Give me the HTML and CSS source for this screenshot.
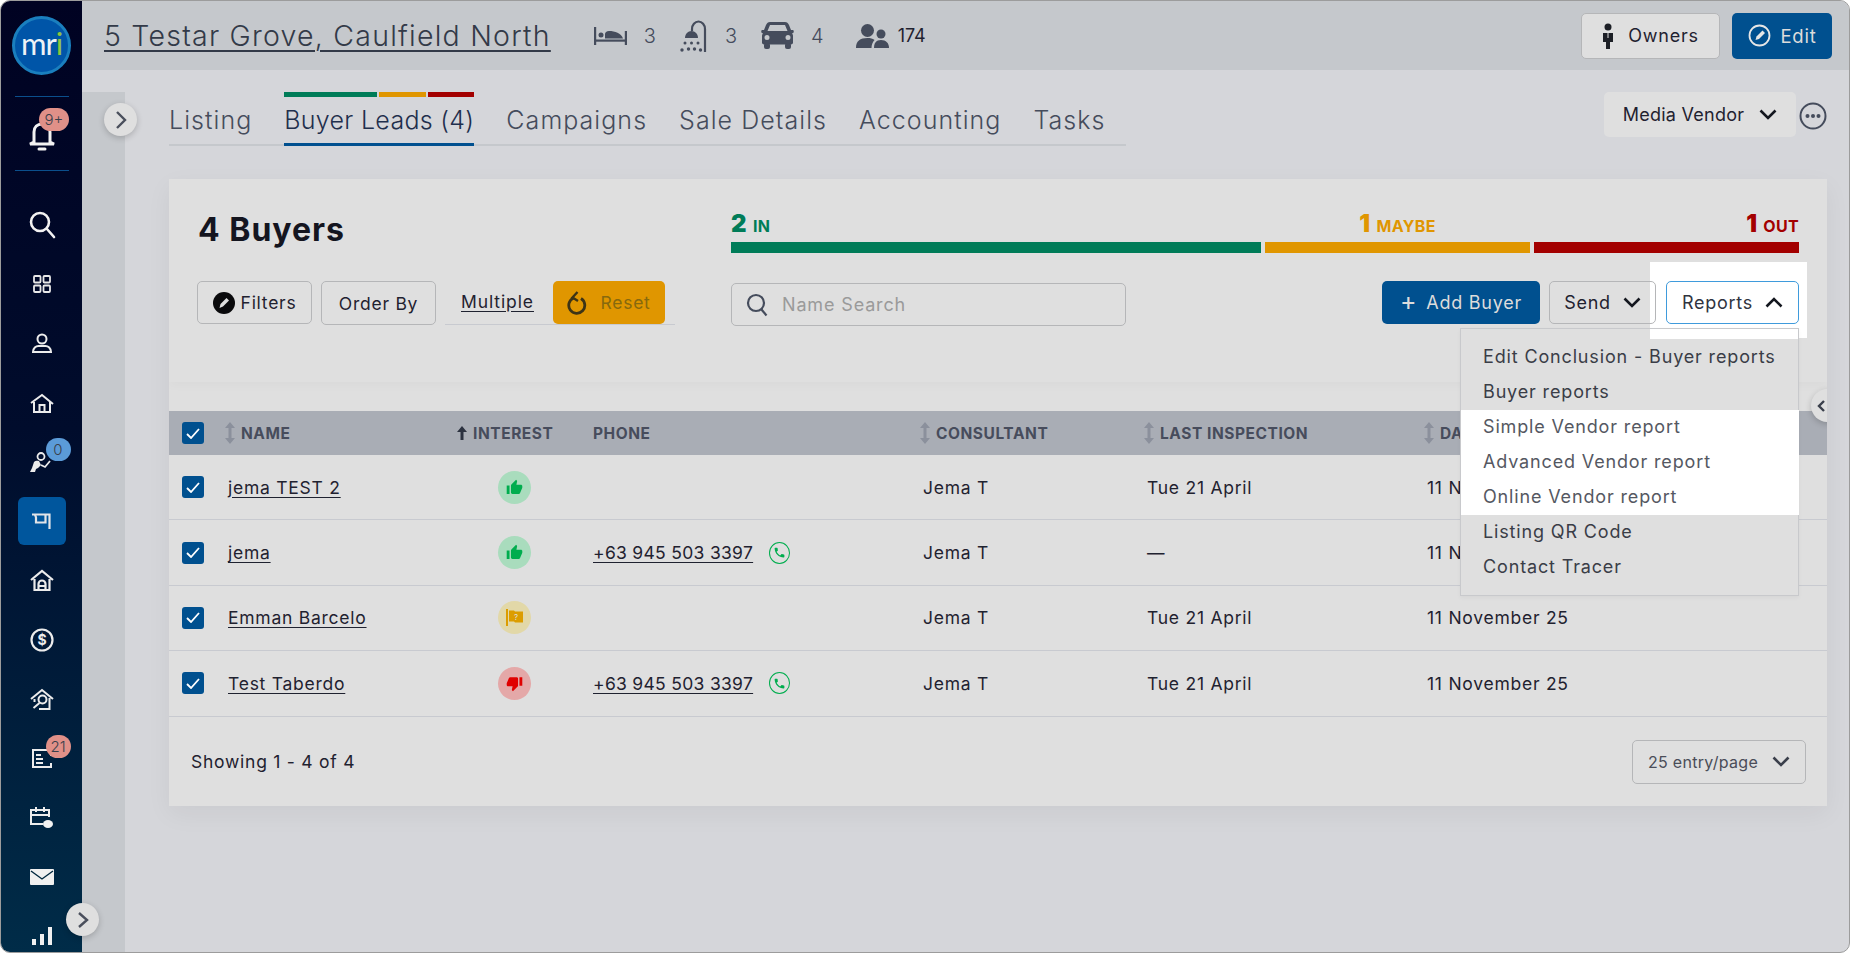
FILE: index.html
```html
<!DOCTYPE html>
<html lang="en">
<head>
    <meta charset="UTF-8">
    <meta name="viewport" content="width=device-width, initial-scale=1.0">
    <title>Buyer Leads</title>
    <link rel="stylesheet" href="styles.css">
</head>
<body>
<div class="app">
    <aside class="sidebar">
        <div class="logo"><span>m</span><span>r</span><span class="logo-i">i</span></div>
        <div class="side-sep"></div>
        <div class="side-bell">
            <svg width="30" height="34" viewBox="0 0 30 34" fill="none" stroke="#f2f2f2" stroke-width="3"><path d="M7 25V15c0-5 3.500-8 8-8s8 3 8 8v10l4 2H3z"/><path d="M12 32h6" stroke-linecap="round"/></svg>
            <span class="badge badge-red badge-bell">9+</span>
        </div>
        <div class="side-sep"></div>
        <nav class="side-nav">
            <a class="side-item"><svg width="28" height="30" viewBox="0 0 28 30" fill="none" stroke="#f2f2f2" stroke-width="2.600"><circle cx="12" cy="12" r="9"/><path d="M19 19l7 8" stroke-linecap="round"/></svg></a>
            <a class="side-item"><svg width="18" height="18" viewBox="0 0 18 18" fill="none" stroke="#e8e8e8" stroke-width="1.800"><rect x="1" y="1" width="6.500" height="6.500" rx="1"/><rect x="10.500" y="1" width="6.500" height="6.500" rx="1"/><rect x="1" y="10.500" width="6.500" height="6.500" rx="1"/><rect x="10.500" y="10.500" width="6.500" height="6.500" rx="1"/></svg></a>
            <a class="side-item"><svg width="22" height="20" viewBox="0 0 22 20" fill="none" stroke="#ececec" stroke-width="2"><circle cx="11" cy="6" r="4.500"/><path d="M2 19c0-4 3-6 5.500-6h7c2.500 0 5.500 2 5.500 6z"/></svg></a>
            <a class="side-item"><svg width="24" height="20" viewBox="0 0 24 20" fill="none" stroke="#ececec" stroke-width="2"><path d="M1 10L12 2l11 9M4 9v10h16V9"/><path d="M9.500 19v-7h5v7"/></svg></a>
            <a class="side-item"><svg width="24" height="22" viewBox="0 0 24 22" fill="#ececec"><circle cx="11" cy="5.500" r="3.500" fill="none" stroke="#ececec" stroke-width="1.800"/><path d="M0 21l2-4 2-6c1-1 3-1.500 5-1l2 4-3 3-2 1-1 3z"/><path d="M11 14l4 2 5-6" fill="none" stroke="#ececec" stroke-width="1.800"/></svg><span class="badge badge-blue badge-nav">0</span></a>
            <a class="side-item side-active"><svg width="19" height="16" viewBox="0 0 19 16" fill="none" stroke="#e2e4e8" stroke-width="2.200"><path d="M0 1.500h17.500V16"/><path d="M3 1.500l1 3v5h9.500v-8"/></svg></a>
            <a class="side-item"><svg width="24" height="22" viewBox="0 0 24 22" fill="none" stroke="#ececec" stroke-width="2.200"><path d="M1 11L12 2l11 9M4.500 10v11h15V10"/><path d="M8.500 21v-6a3.500 3.500 0 0 1 7 0v6M8.500 17h7"/></svg></a>
            <a class="side-item"><svg width="24" height="24" viewBox="0 0 24 24"><circle cx="12" cy="12" r="10.500" fill="none" stroke="#ececec" stroke-width="2.200"/><text x="12" y="17" text-anchor="middle" class="dollar">$</text></svg></a>
            <a class="side-item"><svg width="24" height="22" viewBox="0 0 24 22" fill="none" stroke="#ececec" stroke-width="2"><path d="M1 11L12 2l11 9M4.500 11v3M19.500 10v11H9"/><circle cx="12.500" cy="11.500" r="4"/><path d="M9.500 15l-6 5"/></svg></a>
            <a class="side-item"><svg width="22" height="20" viewBox="0 0 22 20" fill="none" stroke="#ececec" stroke-width="2"><path d="M20 8V2H2v17h18v-4"/><path d="M5 7h5M5 11h7M5 15h7"/></svg><span class="badge badge-red badge-nav">21</span></a>
            <a class="side-item"><svg width="26" height="24" viewBox="0 0 26 24" fill="none" stroke="#ececec" stroke-width="2"><path d="M14 18H2V4h18v7"/><path d="M2 9h18M7 1v5M15 1v5"/><ellipse cx="19" cy="18" rx="5" ry="4" fill="#f2f2f2" stroke="none"/></svg></a>
            <a class="side-item"><svg width="24" height="16" viewBox="0 0 24 16"><rect width="24" height="16" rx="1" fill="#f0f0f0"/><path d="M1 2l11 8 11-8" fill="none" stroke="#00283f" stroke-width="1.400"/></svg></a>
            <a class="side-item"><svg width="20" height="18" viewBox="0 0 20 18" fill="#f0f0f0"><rect x="0" y="12" width="4" height="6"/><rect x="8" y="7" width="4" height="11"/><rect x="16" y="0" width="4" height="18"/></svg></a>
        </nav>
        <button class="round-btn side-toggle"><svg width="14" height="16" viewBox="0 0 14 16" fill="none" stroke="#4a4f5c" stroke-width="2.400"><path d="M3 1l8 7-8 7"/></svg></button>
    </aside>

    <div class="main">
        <header class="topbar">
            <a class="prop-title">5 Testar Grove, Caulfield North</a>
            <div class="prop-stats">
                <svg class="bed" width="33" height="18" viewBox="0 0 33 18" fill="#454c5c"><rect x="0" y="0" width="2.200" height="18"/><rect x="30.800" y="4" width="2.200" height="14"/><rect x="1" y="12.500" width="31" height="2.200"/><circle cx="7" cy="8" r="2.500"/><path d="M11 11.500V7c0-1.500 1.500-3 4-3 6 0 12 2 14 7.500z"/></svg>
                <span class="stat-num">3</span>
                <svg class="shower" width="28" height="32" viewBox="0 0 28 32" fill="#454c5c"><path d="M25 32V9a6.500 7.500 0 0 0-13 0v2" fill="none" stroke="#454c5c" stroke-width="2.200"/><path d="M5 18c0-4 3-7 6.500-7s6.500 3 6.500 7z"/><circle cx="5" cy="23" r="1.500"/><circle cx="11.500" cy="23" r="1.500"/><circle cx="18" cy="23" r="1.500"/><circle cx="2" cy="30" r="1.700"/><circle cx="8.500" cy="29" r="1.700"/><circle cx="14.500" cy="29" r="1.700"/><circle cx="20.500" cy="30" r="1.700"/></svg>
                <span class="stat-num">3</span>
                <svg class="car" width="33" height="27" viewBox="0 0 33 27" fill="#454c5c"><path fill-rule="evenodd" d="M9 0h15c2 0 3 1 4 3l2 5h2c1 0 1 3 0 3l-1 .5c1 1 1 2 1 3v6c0 1-1 2-2 2H3c-1 0-2-1-2-2v-6c0-1 0-2 1-3L1 11c-1 0-1-3 0-3h2l2-5c1-2 2-3 4-3zm0 3L6.500 9h20L24 3zM6 13a2.500 2.500 0 1 0 0 5 2.500 2.500 0 0 0 0-5zm21 0a2.500 2.500 0 1 0 0 5 2.500 2.500 0 0 0 0-5z"/><rect x="3" y="21" width="6" height="6" rx="2"/><rect x="24" y="21" width="6" height="6" rx="2"/></svg>
                <span class="stat-num stat-car">4</span>
                <svg class="people" width="33" height="24" viewBox="0 0 33 24" fill="#454c5c"><circle cx="11.500" cy="6.500" r="6.500"/><path d="M0 24c0-7 4-10 11.500-10 3 0 5 .5 7 2-2 2-3 5-3 8z"/><circle cx="25" cy="10" r="4.500"/><path d="M18 24c0-5 2-8 7-8s8 3 8 8z"/></svg>
                <span class="stat-count">174</span>
            </div>
            <div class="top-actions">
                <button class="btn btn-owners"><svg width="12" height="26" viewBox="0 0 12 26" fill="#1c1f26"><circle cx="6" cy="4" r="3.500"/><path d="M1 10h10v9H8v7H4v-7H1z"/><path d="M6 10v5" stroke="#dfdfdf"/></svg>Owners</button>
                <button class="btn btn-blue btn-edit"><svg width="23" height="23" viewBox="0 0 23 23" fill="none" stroke="#e6e6e6" stroke-width="1.800"><circle cx="11.500" cy="11.500" r="10"/><path d="M7.500 16l1-3.500 6-6 2.500 2.500-6 6z" fill="#e6e6e6" stroke="none"/></svg>Edit</button>
            </div>
        </header>

        <div class="page">
            <div class="strip">
                <button class="round-btn strip-toggle"><svg width="14" height="18" viewBox="0 0 14 18" fill="none" stroke="#4a4f5c" stroke-width="2.400"><path d="M3 1l8 8-8 8"/></svg></button>
            </div>
            <div class="content">
                <div class="tabs-row">
                    <div class="tabs">
                        <a class="tab">Listing</a>
                        <a class="tab tab-active">
                            <span class="tab-bars"><i class="bar-in"></i><i class="bar-maybe"></i><i class="bar-out"></i></span>
                            Buyer Leads (4)
                        </a>
                        <a class="tab">Campaigns</a>
                        <a class="tab">Sale Details</a>
                        <a class="tab">Accounting</a>
                        <a class="tab">Tasks</a>
                    </div>
                    <div class="tabs-side">
                        <button class="vendor-select">Media Vendor <svg width="18" height="11" viewBox="0 0 18 11" fill="none" stroke="#14171f" stroke-width="2.600"><path d="M1.500 1.500L9 9l7.500-7.500"/></svg></button>
                        <svg class="more" width="28" height="28" viewBox="0 0 28 28" fill="#454c5c"><circle cx="14" cy="14" r="12.500" fill="none" stroke="#454c5c" stroke-width="2"/><circle cx="8.500" cy="14" r="2"/><circle cx="14" cy="14" r="2"/><circle cx="19.500" cy="14" r="2"/></svg>
                    </div>
                </div>

                <section class="card">
                    <div class="card-top">
                        <div class="top-grid">
                            <h1 class="card-title">4 Buyers</h1>
                            <div class="progress">
                                <div class="seg seg-in"><div class="seg-label"><b>2</b> IN</div><div class="seg-bar"></div></div>
                                <div class="seg seg-maybe"><div class="seg-label"><b>1</b> MAYBE</div><div class="seg-bar"></div></div>
                                <div class="seg seg-out"><div class="seg-label"><b>1</b> OUT</div><div class="seg-bar"></div></div>
                            </div>
                            <div class="filter-row">
                                <button class="btn btn-filters"><svg width="22" height="22" viewBox="0 0 22 22"><circle cx="11" cy="11" r="11" fill="#0a0a0c"/><path d="M6.500 16l1-4 6-6 2.500 2.500-6 6z" fill="#dfdfdf"/></svg>Filters</button>
                                <button class="btn btn-order">Order By</button>
                                <div class="multi-group">
                                    <a class="multiple">Multiple</a>
                                    <button class="btn btn-reset"><svg width="20" height="24" viewBox="0 0 20 24" fill="none" stroke="#3d3416" stroke-width="2.800"><path d="M14 7.500a8 8 0 1 1-7.500-.5"/><path d="M10.500 1L5.500 6.500 11 10" stroke-width="2.400"/></svg>Reset</button>
                                </div>
                            </div>
                            <div class="action-row">
                                <div class="search-box">
                                    <svg width="22" height="24" viewBox="0 0 22 24" fill="none" stroke="#454c5c" stroke-width="2.200"><circle cx="10" cy="10" r="8"/><path d="M15.500 16.500l5 6"/></svg>
                                    <input class="search-input" type="text" placeholder="Name Search">
                                </div>
                                <div class="action-btns">
                                    <button class="btn btn-blue btn-add"><span class="plus">+</span>Add Buyer</button>
                                    <button class="btn btn-send">Send <svg width="18" height="11" viewBox="0 0 18 11" fill="none" stroke="#14171f" stroke-width="2.600"><path d="M1.500 1.500L9 9l7.500-7.500"/></svg></button>
                                    <div class="reports-wrap">
                                        <span class="spot"></span>
                                        <button class="btn btn-reports">Reports <svg width="18" height="11" viewBox="0 0 18 11" fill="none" stroke="#14171f" stroke-width="2.600"><path d="M1.500 9.500L9 2l7.500 7.500"/></svg></button>
                                        <div class="reports-menu">
                                            <a class="menu-link">Edit Conclusion - Buyer reports</a>
                                            <a class="menu-link">Buyer reports</a>
                                            <a class="menu-link menu-lit">Simple Vendor report</a>
                                            <a class="menu-link menu-lit">Advanced Vendor report</a>
                                            <a class="menu-link menu-lit">Online Vendor report</a>
                                            <a class="menu-link">Listing QR Code</a>
                                            <a class="menu-link">Contact Tracer</a>
                                        </div>
                                    </div>
                                </div>
                            </div>
                        </div>
                    </div>

                    <div class="table">
                        <div class="t-row t-head">
                            <div><span class="check"><svg width="14" height="11" viewBox="0 0 14 11" fill="none" stroke="#fff" stroke-width="1.800"><path d="M1 6l4 4 8-9"/></svg></span></div>
                            <div class="th"><svg class="sort" width="10" height="22" viewBox="0 0 10 22" fill="#8b909c"><path d="M5 0l5 6H6.500v10H10l-5 6-5-6h3.500V6H0z"/></svg>Name</div>
                            <div class="th th-interest"><svg class="sort-up" width="10" height="14" viewBox="0 0 10 14" fill="#2c3240"><path d="M5 0l5 6H6.500v8h-3V6H0z"/></svg>Interest</div>
                            <div class="th th-plain">Phone</div>
                            <div class="th"><svg class="sort" width="10" height="22" viewBox="0 0 10 22" fill="#8b909c"><path d="M5 0l5 6H6.500v10H10l-5 6-5-6h3.500V6H0z"/></svg>Consultant</div>
                            <div class="th"><svg class="sort" width="10" height="22" viewBox="0 0 10 22" fill="#8b909c"><path d="M5 0l5 6H6.500v10H10l-5 6-5-6h3.500V6H0z"/></svg>Last Inspection</div>
                            <div class="th"><svg class="sort" width="10" height="22" viewBox="0 0 10 22" fill="#8b909c"><path d="M5 0l5 6H6.500v10H10l-5 6-5-6h3.500V6H0z"/></svg>Date</div>
                        </div>

                        <div class="t-row">
                            <div><span class="check"><svg width="14" height="11" viewBox="0 0 14 11" fill="none" stroke="#fff" stroke-width="1.800"><path d="M1 6l4 4 8-9"/></svg></span></div>
                            <div><a class="link">jema TEST 2</a></div>
                            <div class="interest-cell"><span class="interest int-in"><svg width="17" height="17" viewBox="0 0 24 24" fill="#00ad4e"><path d="M1 21h4V9H1v12zm22-11c0-1.100-.9-2-2-2h-6.310l.95-4.570.03-.32c0-.41-.17-.79-.44-1.060L14.170 1 7.590 7.590C7.220 7.950 7 8.450 7 9v10c0 1.100.9 2 2 2h9c.83 0 1.540-.5 1.840-1.220l3.020-7.050c.09-.23.14-.47.14-.73v-2z"/></svg></span></div>
                            <div></div>
                            <div>Jema T</div>
                            <div>Tue 21 April</div>
                            <div>11 November 25</div>
                        </div>
                        <div class="t-row">
                            <div><span class="check"><svg width="14" height="11" viewBox="0 0 14 11" fill="none" stroke="#fff" stroke-width="1.800"><path d="M1 6l4 4 8-9"/></svg></span></div>
                            <div><a class="link">jema</a></div>
                            <div class="interest-cell"><span class="interest int-in"><svg width="17" height="17" viewBox="0 0 24 24" fill="#00ad4e"><path d="M1 21h4V9H1v12zm22-11c0-1.100-.9-2-2-2h-6.310l.95-4.570.03-.32c0-.41-.17-.79-.44-1.060L14.170 1 7.590 7.590C7.220 7.950 7 8.450 7 9v10c0 1.100.9 2 2 2h9c.83 0 1.540-.5 1.840-1.220l3.020-7.050c.09-.23.14-.47.14-.73v-2z"/></svg></span></div>
                            <div class="phone-cell"><a class="link">+63 945 503 3397</a><span class="call"><svg width="13" height="13" viewBox="0 0 24 24" fill="#00ad4e"><path d="M6.620 10.790c1.440 2.830 3.760 5.140 6.590 6.590l2.200-2.200c.27-.27.67-.36 1.020-.24 1.120.37 2.330.57 3.570.57.55 0 1 .45 1 1V20c0 .55-.45 1-1 1-9.390 0-17-7.610-17-17 0-.55.45-1 1-1h3.500c.55 0 1 .45 1 1 0 1.250.2 2.450.57 3.570.11.35.03.74-.25 1.020l-2.200 2.200z"/></svg></span></div>
                            <div>Jema T</div>
                            <div>—</div>
                            <div>11 November 25</div>
                        </div>
                        <div class="t-row">
                            <div><span class="check"><svg width="14" height="11" viewBox="0 0 14 11" fill="none" stroke="#fff" stroke-width="1.800"><path d="M1 6l4 4 8-9"/></svg></span></div>
                            <div><a class="link">Emman Barcelo</a></div>
                            <div class="interest-cell"><span class="interest int-maybe"><svg width="17" height="17" viewBox="0 0 17 17" fill="#dc9d00"><rect x="0" y="0" width="2" height="17"/><path d="M3 1.500h5l1 1h8v11H9l-1-1H3z"/><text x="10" y="11" text-anchor="middle" class="flag-q">?</text></svg></span></div>
                            <div></div>
                            <div>Jema T</div>
                            <div>Tue 21 April</div>
                            <div>11 November 25</div>
                        </div>
                        <div class="t-row">
                            <div><span class="check"><svg width="14" height="11" viewBox="0 0 14 11" fill="none" stroke="#fff" stroke-width="1.800"><path d="M1 6l4 4 8-9"/></svg></span></div>
                            <div><a class="link">Test Taberdo</a></div>
                            <div class="interest-cell"><span class="interest int-out"><svg width="17" height="17" viewBox="0 0 24 24" fill="#e00000"><path d="M15 3H6c-.83 0-1.540.5-1.840 1.220l-3.020 7.050c-.09.23-.14.47-.14.73v2c0 1.100.9 2 2 2h6.310l-.95 4.570-.03.32c0 .41.17.79.44 1.060L9.830 23l6.590-6.590c.36-.36.58-.86.58-1.410V5c0-1.100-.9-2-2-2zm4 0v12h4V3h-4z"/></svg></span></div>
                            <div class="phone-cell"><a class="link">+63 945 503 3397</a><span class="call"><svg width="13" height="13" viewBox="0 0 24 24" fill="#00ad4e"><path d="M6.620 10.790c1.440 2.830 3.760 5.140 6.590 6.590l2.200-2.200c.27-.27.67-.36 1.020-.24 1.120.37 2.330.57 3.570.57.55 0 1 .45 1 1V20c0 .55-.45 1-1 1-9.390 0-17-7.610-17-17 0-.55.45-1 1-1h3.500c.55 0 1 .45 1 1 0 1.250.2 2.450.57 3.570.11.35.03.74-.25 1.020l-2.200 2.200z"/></svg></span></div>
                            <div>Jema T</div>
                            <div>Tue 21 April</div>
                            <div>11 November 25</div>
                        </div>
                    </div>

                    <div class="table-foot">
                        <span>Showing 1 - 4 of 4</span>
                        <button class="btn btn-perpage">25 entry/page <svg width="18" height="11" viewBox="0 0 18 11" fill="none" stroke="#3a3f4b" stroke-width="2.600"><path d="M1.500 1.500L9 9l7.500-7.500"/></svg></button>
                    </div>
                    <button class="round-btn card-toggle"><svg width="10" height="12" viewBox="0 0 10 12" fill="none" stroke="#3a3f4b" stroke-width="2.400"><path d="M8 1L3 6l5 5"/></svg></button>
                </section>
            </div>
        </div>
    </div>
</div>
</body>
</html>
```

FILE: styles.css
```css
* {
    box-sizing: border-box;
}
html, body {
    margin: 0;
    height: 953px;
    overflow: hidden;
    background: #fff;
}
body {
    font-family: Inter, "Open Sans", sans-serif;
    font-size: 17.5px;
    letter-spacing: 0.75px;
    color: #1f2230;
}
button {
    font-family: inherit;
    font-size: inherit;
    letter-spacing: inherit;
    color: inherit;
    cursor: pointer;
}
a {
    color: inherit;
}
.app {
    display: flex;
    height: 953px;
    border: 1px solid #9c9c9c;
    border-radius: 10px;
    overflow: hidden;
    background: #d5d6da;
}

/* sidebar */
.sidebar {
    position: relative;
    width: 81px;
    flex-shrink: 0;
    display: flex;
    flex-direction: column;
    align-items: center;
    background: linear-gradient(180deg, #000222 0%, #000c2c 45%, #002c48 100%);
}
.logo {
    width: 59px;
    height: 59px;
    margin-top: 15px;
    flex-shrink: 0;
    border-radius: 50%;
    background: #0055a8;
    border: 3px solid #1a7fbe;
    display: flex;
    align-items: center;
    justify-content: center;
    font-family: Lato, sans-serif;
    font-size: 31px;
    font-weight: 400;
    letter-spacing: -1px;
    color: #eef2f6;
    padding-bottom: 5px;
}
.logo-i {
    color: #8dc63f;
}
.side-sep {
    width: 54px;
    height: 1px;
    flex-shrink: 0;
    background: #0b4f8c;
}
.logo + .side-sep {
    margin-top: 21px;
}
.side-bell {
    position: relative;
    height: 73px;
    width: 100%;
    flex-shrink: 0;
    display: flex;
    align-items: center;
    justify-content: center;
}
.side-nav {
    display: flex;
    flex-direction: column;
    align-items: center;
    margin-top: 24px;
    width: 100%;
}
.side-item {
    position: relative;
    width: 48px;
    height: 59.3px;
    flex-shrink: 0;
    display: flex;
    align-items: center;
    justify-content: center;
}
.side-active::before {
    content: "";
    position: absolute;
    left: 0;
    right: 0;
    top: 6px;
    bottom: 6px;
    border-radius: 6px;
    background: #00569d;
}
.side-active svg {
    position: relative;
}
.badge {
    position: absolute;
    height: 23px;
    border-radius: 12px;
    font-size: 15px;
    letter-spacing: 0;
    line-height: 23px;
    text-align: center;
    color: #3a3f4b;
    font-weight: 300;
}
.badge-red {
    background: #e09088;
}
.badge-blue {
    background: #5b9bd8;
}
.badge-bell {
    left: 38px;
    top: 11px;
    width: 30px;
}
.badge-nav {
    left: 28px;
    top: 6px;
    width: 25px;
}
.round-btn {
    position: absolute;
    width: 33px;
    height: 33px;
    padding: 0;
    border: none;
    border-radius: 50%;
    background: #dfdfdf;
    display: flex;
    align-items: center;
    justify-content: center;
    box-shadow: 0 2px 6px rgba(0, 0, 0, 0.2);
}
.side-toggle {
    left: 65px;
    top: 902px;
    z-index: 5;
}

/* top bar */
.main {
    flex: 1;
    min-width: 0;
    display: flex;
    flex-direction: column;
}
.topbar {
    height: 69px;
    flex-shrink: 0;
    display: flex;
    align-items: center;
    padding: 0 17px 0 22px;
    background: #c5c8cc;
}
.prop-title {
    font-size: 28.500px;
    font-weight: 300;
    letter-spacing: 1.22px;
    color: #333a48;
    text-decoration: underline;
    text-decoration-thickness: 2px;
    text-underline-offset: 4px;
}
.prop-stats {
    display: flex;
    align-items: center;
    margin-left: 43px;
    color: #454c5c;
}
.stat-num {
    font-size: 20px;
    font-weight: 300;
    letter-spacing: 0;
    margin: 0 24px 0 17px;
}
.stat-car {
    margin-right: 32px;
}
.stat-count {
    font-size: 18px;
    letter-spacing: 0;
    margin-left: 9px;
    color: #1f2230;
}
.top-actions {
    margin-left: auto;
    display: flex;
    gap: 12px;
}
.btn {
    height: 44px;
    display: inline-flex;
    align-items: center;
    justify-content: center;
    border: 1px solid #b5b6b8;
    border-radius: 5px;
    background: transparent;
    padding: 0;
    white-space: nowrap;
}
.btn-owners {
    width: 139px;
    height: 46px;
    gap: 14px;
    font-size: 18px;
    background: #dfdfdf;
}
.btn-blue {
    border: none;
    background: #00508f;
    color: #dcdcdc;
}
.btn-edit {
    width: 100px;
    height: 46px;
    gap: 10px;
    font-size: 18.500px;
}

/* tabs */
.page {
    flex: 1;
    min-height: 0;
    display: flex;
}
.strip {
    position: relative;
    width: 43px;
    flex-shrink: 0;
    margin-top: 22px;
    background: #c5c8cc;
}
.strip-toggle {
    left: 22px;
    top: 11px;
}
.content {
    flex: 1;
    min-width: 0;
    padding: 22px 22px 0 44px;
}
.tabs-row {
    display: flex;
    justify-content: space-between;
    align-items: flex-start;
}
.tabs {
    width: 957px;
    height: 54px;
    display: flex;
    gap: 32px;
    border-bottom: 2px solid #c5c8cc;
    font-size: 25px;
    font-weight: 300;
    color: #454c5c;
}
.tab {
    position: relative;
    height: 54px;
    padding-top: 13px;
    letter-spacing: 1.05px;
    white-space: nowrap;
}
.tab-active {
    color: #1f2f4d;
    border-bottom: 3px solid #00508f;
    letter-spacing: 0.3px;
}
.tab-bars {
    position: absolute;
    left: 0;
    right: 0;
    top: 0;
    height: 5px;
    display: flex;
    gap: 2px;
}
.tab-bars i {
    display: block;
}
.bar-in {
    flex: 2;
    background: #007c58;
}
.bar-maybe {
    flex: 1;
    background: #e09600;
}
.bar-out {
    flex: 1;
    background: #a30000;
}
.tabs-side {
    display: flex;
    align-items: center;
    gap: 3px;
}
.vendor-select {
    width: 192px;
    height: 45px;
    border: none;
    border-radius: 5px;
    background: #dfdfdf;
    display: flex;
    align-items: center;
    justify-content: center;
    gap: 15px;
    font-size: 18px;
    letter-spacing: 0.25px;
    color: #1f2230;
}
.more {
    margin-top: 2px;
}

/* card */
.card {
    position: relative;
    margin-top: 33px;
    height: 627px;
    background: #dfdfdf;
    box-shadow: 0 8px 24px rgba(0, 0, 0, 0.05);
    overflow: hidden;
}
.card-top {
    height: 203px;
    padding: 0 28px;
    box-shadow: 0 5px 8px rgba(0, 0, 0, 0.02);
}
.top-grid {
    display: grid;
    grid-template-columns: 534px 1fr;
    grid-template-rows: 74px auto;
    row-gap: 28px;
}
.card-title {
    margin: 33px 0 0 1px;
    font-size: 32px;
    line-height: 36px;
    font-weight: 700;
    letter-spacing: 1px;
    color: #14151f;
}
.progress {
    display: flex;
    gap: 4px;
}
.seg {
    display: flex;
    flex-direction: column;
    justify-content: flex-end;
    flex: 1;
}
.seg-in {
    flex: 2;
}
.seg-bar {
    height: 11px;
    background: currentColor;
}
.seg-label {
    font-size: 16px;
    font-weight: 700;
    line-height: 26px;
    margin-bottom: 3px;
    letter-spacing: 0.3px;
}
.seg-label b {
    font-size: 24px;
    margin-right: 2px;
}
.seg-in {
    color: #007c58;
}
.seg-maybe {
    color: #e09600;
    text-align: center;
}
.seg-out {
    color: #a30000;
    text-align: right;
}
.filter-row {
    display: flex;
    align-items: flex-start;
}
.btn-filters {
    width: 115px;
    gap: 6px;
    height: 43px;
}
.btn-order {
    width: 115px;
    margin-left: 9px;
}
.multi-group {
    width: 230px;
    height: 44px;
    margin-left: 9px;
    display: flex;
    align-items: flex-start;
    border-bottom: 1px solid #c8cad0;
}
.multiple {
    margin-left: 16px;
    margin-top: 10px;
    text-decoration: underline;
    text-underline-offset: 3px;
    letter-spacing: 0.9px;
}
.btn-reset {
    width: 112px;
    height: 43px;
    margin-left: auto;
    margin-right: 10px;
    gap: 13px;
    border: none;
    background: #e09600;
    color: #87690e;
}
.action-row {
    display: flex;
    justify-content: space-between;
    align-items: flex-start;
}
.search-box {
    width: 395px;
    height: 43px;
    margin-top: 2px;
    display: flex;
    align-items: center;
    gap: 12px;
    padding-left: 14px;
    border: 1px solid #b5b6b8;
    border-radius: 5px;
}
.search-input {
    flex: 1;
    min-width: 0;
    border: none;
    background: transparent;
    outline: none;
    font-family: inherit;
    font-size: 18px;
    letter-spacing: 0.85px;
}
.search-input::placeholder {
    color: #9a9a9a;
    opacity: 1;
}
.action-btns {
    display: flex;
    gap: 9px;
}
.btn-add {
    width: 158px;
    height: 43px;
    gap: 9px;
    font-size: 18px;
}
.plus {
    font-size: 25px;
    line-height: 20px;
    margin-top: -3px;
}
.btn-send {
    position: relative;
    z-index: 2;
    width: 107px;
    height: 43px;
    gap: 12px;
    font-size: 18px;
}
.reports-wrap {
    position: relative;
    margin-left: 1px;
}
.spot {
    position: absolute;
    left: -16px;
    top: -19px;
    width: 157px;
    height: 76px;
    background: #fff;
}
.btn-reports {
    position: relative;
    z-index: 2;
    width: 133px;
    height: 43px;
    gap: 12px;
    font-size: 18px;
    background: #fff;
    border-color: #3f9bdc;
    color: #30343f;
}
.reports-menu {
    position: absolute;
    z-index: 1;
    right: 0;
    top: 47px;
    width: 339px;
    height: 268px;
    padding: 11px 0;
    border: 1px solid #c8c9cc;
    background: linear-gradient(#fff, #fff) right top / 148px 10px no-repeat, #dfdfdf;
    box-shadow: 0 2px 4px rgba(0, 0, 0, 0.04);
}
.menu-link {
    display: block;
    height: 35px;
    line-height: 34px;
    padding-left: 22px;
    font-size: 18px;
    letter-spacing: 0.85px;
    color: #3a3d47;
    white-space: nowrap;
}
.menu-lit {
    background: #fff;
    color: #555862;
    margin-right: -1px;
}

/* table */
.table {
    margin-top: 29px;
}
.t-row {
    display: grid;
    grid-template-columns: 59px 229px 136px 330px 224px 280px 1fr;
    align-items: center;
    height: 65.4px;
    border-bottom: 1px solid #c8cad0;
}
.t-head {
    height: 44px;
    border-bottom: none;
    background: #a9adb5;
}
.th {
    display: flex;
    align-items: center;
    gap: 6px;
    font-size: 15.500px;
    font-weight: 700;
    text-transform: uppercase;
    letter-spacing: 0.55px;
    color: #474c5c;
    margin-left: -3px;
}
.th-plain {
    margin-left: 0;
}
.th-interest {
    margin-left: 0;
}
.check {
    display: flex;
    align-items: center;
    justify-content: center;
    width: 22px;
    height: 22px;
    margin-left: 13px;
    border-radius: 3px;
    background: #00508f;
}
.link {
    text-decoration: underline;
    text-underline-offset: 3px;
}
.interest-cell {
    padding-left: 41px;
}
.interest {
    display: flex;
    align-items: center;
    justify-content: center;
    width: 33px;
    height: 33px;
    border-radius: 50%;
}
.int-in {
    background: #a9dcbd;
}
.int-maybe {
    background: #e2d8a8;
}
.int-out {
    background: #e4a8a8;
}
.flag-q {
    font-size: 8px;
    letter-spacing: 0;
    fill: #dfdfdf;
}
.dollar {
    font-size: 14px;
    font-weight: 700;
    letter-spacing: 0;
    fill: #ececec;
}
.phone-cell {
    display: flex;
    align-items: center;
    letter-spacing: 0.3px;
}
.call {
    display: flex;
    align-items: center;
    justify-content: center;
    width: 21px;
    height: 22px;
    margin-left: 16px;
    border: 1px solid #00ad4e;
    border-radius: 50%;
}
.table-foot {
    height: 90px;
    display: flex;
    align-items: center;
    justify-content: space-between;
    padding: 0 21px 0 22px;
}
.btn-perpage {
    width: 174px;
    gap: 14px;
    font-size: 16px;
    letter-spacing: 0.3px;
    color: #4a4d58;
}
.card-toggle {
    right: -17px;
    top: 210px;
    width: 33px;
    height: 33px;
    justify-content: flex-start;
    padding-left: 5px;
}
```
